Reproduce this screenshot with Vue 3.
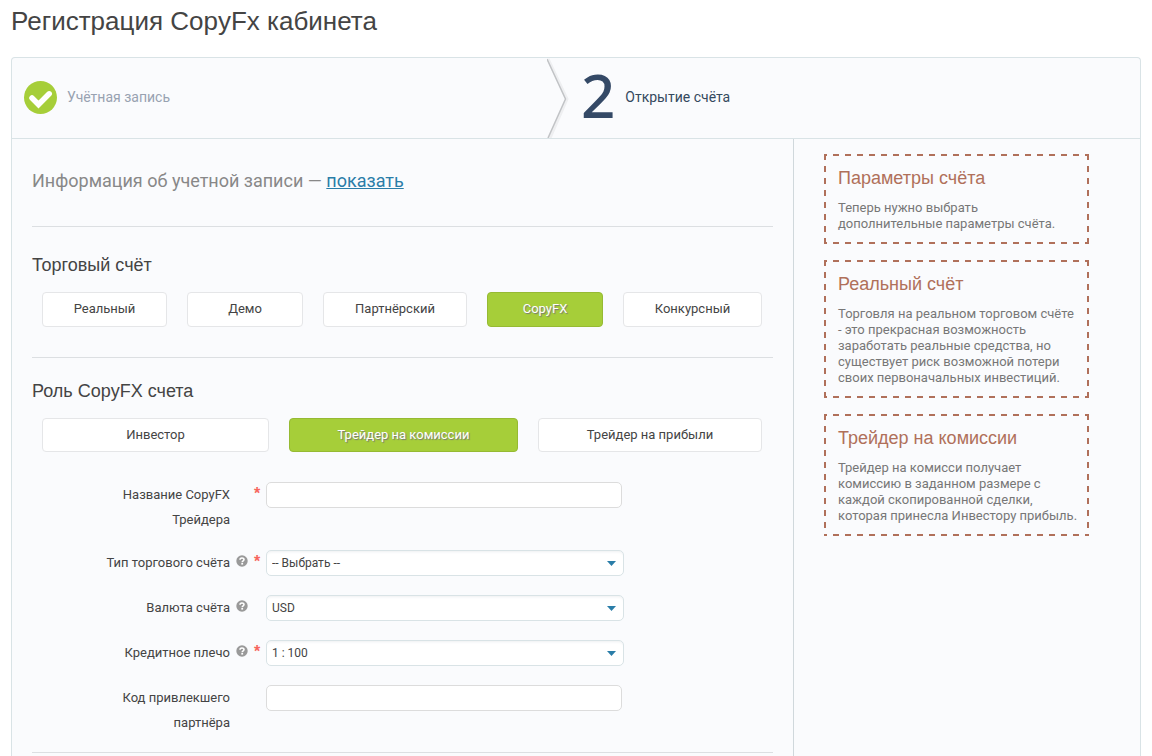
<script setup>
import { ref } from 'vue'

const accountTypes = ['Реальный', 'Демо', 'Партнёрский', 'CopyFX', 'Конкурсный']
const roles = ['Инвестор', 'Трейдер на комиссии', 'Трейдер на прибыли']
const account = ref('CopyFX')
const role = ref('Трейдер на комиссии')

const fields = [
  { id: 'trader', label: 'Название CopyFX Трейдера', required: true },
  { id: 'type', label: 'Тип торгового счёта', required: true, help: true, options: ['-- Выбрать --'] },
  { id: 'currency', label: 'Валюта счёта', help: true, options: ['USD', 'EUR'] },
  { id: 'leverage', label: 'Кредитное плечо', required: true, help: true, options: ['1 : 100', '1 : 200'] },
  { id: 'partner', label: 'Код привлекшего партнёра' },
]

const hints = [
  { title: 'Параметры счёта', text: 'Теперь нужно выбрать дополнительные параметры счёта.' },
  {
    title: 'Реальный счёт',
    text: 'Торговля на реальном торговом счёте - это прекрасная возможность заработать реальные средства, но существует риск возможной потери своих первоначальных инвестиций.',
  },
  {
    title: 'Трейдер на комиссии',
    text: 'Трейдер на комисси получает комиссию в заданном размере с каждой скопированной сделки, которая принесла Инвестору прибыль.',
  },
]
</script>

<template>
  <div class="page">
    <h1>Регистрация CopyFx кабинета</h1>
    <div class="panel">
      <header class="steps">
        <div class="step done">
          <svg width="33" height="33" viewBox="0 0 33 33" aria-hidden="true">
            <circle cx="16.5" cy="16.5" r="16.5" fill="#a6ce39" />
            <path d="M8 17l6.500 6.500L25.200 12.800" fill="none" stroke="#fff" stroke-width="5.500" stroke-linecap="round" />
          </svg>
          <span>Учётная запись</span>
        </div>
        <div class="step current">
          <svg class="arrow" width="22" height="80" viewBox="0 0 22 80" aria-hidden="true">
            <path d="M1 1L20 41L3 80" fill="none" stroke="#eeeff1" stroke-width="3" />
            <path d="M0 1L18.500 41L1 80" fill="none" stroke="#c1c3c6" stroke-width="1.500" />
          </svg>
          <span class="number">2</span>
          <span class="title">Открытие счёта</span>
        </div>
      </header>
      <div class="body">
        <main>
          <section class="info">
            <p>Информация об учетной записи — <a href="#account">показать</a></p>
          </section>
          <section class="group">
            <h2>Торговый счёт</h2>
            <div class="choices accounts">
              <button v-for="t in accountTypes" :key="t" type="button" :class="{ active: account === t }" @click="account = t">{{ t }}</button>
            </div>
          </section>
          <section class="role">
            <h2>Роль CopyFX счета</h2>
            <div class="choices roles">
              <button v-for="r in roles" :key="r" type="button" :class="{ active: role === r }" @click="role = r">{{ r }}</button>
            </div>
            <form @submit.prevent>
              <div v-for="f in fields" :key="f.id" class="field">
                <label :for="f.id">{{ f.label }}</label>
                <span class="help">
                  <svg v-if="f.help" width="12" height="12" viewBox="0 0 12 12" aria-hidden="true">
                    <circle cx="6" cy="6" r="5.700" fill="#999" />
                    <path d="M4 4.700C4 2.400 8 2.400 8 4.600C8 5.900 6.200 5.700 6.200 7.200" fill="none" stroke="#fff" stroke-width="1.600" />
                    <path d="M5.300 8h1.800v1.600h-1.800z" fill="#fff" />
                  </svg>
                </span>
                <span class="star">{{ f.required ? '*' : '' }}</span>
                <div v-if="f.options" class="select">
                  <select :id="f.id">
                    <option v-for="o in f.options" :key="o">{{ o }}</option>
                  </select>
                  <svg width="9" height="5" viewBox="0 0 9 5" aria-hidden="true"><path d="M0 0h9L4.500 5z" fill="#2a7da8" /></svg>
                </div>
                <input v-else :id="f.id" type="text" />
              </div>
            </form>
          </section>
        </main>
        <aside>
          <section v-for="h in hints" :key="h.title" class="hint">
            <h3>{{ h.title }}</h3>
            <p>{{ h.text }}</p>
          </section>
        </aside>
      </div>
    </div>
  </div>
</template>

<style>
body {
  margin: 0;
  background: #fff;
}
</style>

<style scoped>
* {
  box-sizing: border-box;
}
.page {
  display: flex;
  flex-direction: column;
  min-height: 100vh;
  padding: 0 11px;
  font: 13px/16px Roboto, sans-serif;
  color: #444;
}
h1,
h2,
h3 {
  margin: 0;
  font-family: 'Liberation Sans', Arial, sans-serif;
  font-weight: 400;
}
h1 {
  font-size: 26px;
  line-height: 30px;
  padding: 6px 0 21px;
}
.panel {
  flex: 1;
  display: flex;
  flex-direction: column;
  border: 1px solid #d9e3e6;
  border-bottom: 0;
  border-radius: 4px 4px 0 0;
  background: #fafbfd;
}
.steps {
  display: grid;
  grid-template-columns: 535fr 593fr;
  height: 81px;
  border-bottom: 1px solid #d9e3e6;
}
.step {
  display: flex;
  align-items: center;
  height: 80px;
  font-size: 14px;
}
.done {
  gap: 10px;
  padding: 0 0 2px 12px;
  color: #98a2b1;
}
.current {
  color: #34495e;
}
.number {
  font: 500 60px/74px 'Noto Sans', sans-serif;
  color: #344966;
  margin: 0 10px 6px 12px;
}
.title {
  padding-bottom: 3px;
}
.body {
  flex: 1;
  display: grid;
  grid-template-columns: 781fr 347fr;
}
main {
  padding: 0 20px;
}
.info {
  border-bottom: 1px solid #dcdfe2;
  padding: 30px 0 33px;
}
.info p {
  margin: 0;
  font-size: 18px;
  line-height: 24px;
  color: #888;
}
a {
  color: #2a7da8;
}
h2 {
  font-size: 18px;
  line-height: 24px;
}
.group {
  border-bottom: 1px solid #dcdfe2;
  padding: 26px 0 30px;
}
.role {
  border-bottom: 1px solid #dcdfe2;
  padding-top: 21px;
}
.choices {
  display: grid;
  gap: 20px;
  margin: 15px 11px 0 10px;
}
.accounts {
  grid-template-columns: 125fr 116fr 144fr 116fr 139fr;
}
.roles {
  grid-template-columns: 227fr 229fr 224fr;
}
button {
  height: 34px;
  padding: 0 0 1px;
  border: 1px solid #e5e6e8;
  border-radius: 4px;
  background: #fff;
  font: inherit;
  color: #444;
  white-space: nowrap;
}
.accounts button {
  height: 35px;
}
button.active {
  border-color: #96ba33;
  background: #a6ce39;
  color: #fff;
  text-shadow: 1px 1px 1px #777;
}
form {
  display: flex;
  flex-direction: column;
  gap: 18px;
  padding: 30px 0 17px;
}
.field {
  display: grid;
  grid-template-columns: 198px 17px 19px 358px;
  align-items: start;
  min-height: 27px;
}
label {
  justify-self: end;
  width: 130px;
  line-height: 25px;
  text-align: right;
}
.help {
  padding: 5px 0 0 6px;
  line-height: 0;
}
.star {
  padding-left: 7px;
  font: bold 16px/24px 'Liberation Sans', sans-serif;
  color: #f7665e;
}
input,
select {
  display: block;
  height: 26px;
  border: 1px solid #dcdcdc;
  border-radius: 5px;
  background: #fff;
  font: 12px/16px Roboto, sans-serif;
  color: #444;
}
input {
  width: 356px;
  padding: 0 6px;
}
.select {
  display: grid;
  align-items: center;
}
.select > * {
  grid-area: 1 / 1;
}
.select svg {
  justify-self: end;
  margin-right: 8px;
  pointer-events: none;
}
select {
  width: 100%;
  appearance: none;
  padding: 0 20px 0 5px;
  border-color: #d9e3e6;
  box-shadow: inset 0 3px 3px -2px #eef0f2;
}
aside {
  display: flex;
  flex-direction: column;
  gap: 16px;
  padding: 15px 51px 0 30px;
  border-left: 1px solid #d0d8dc;
}
.hint {
  --across: repeating-linear-gradient(90deg, #b0705a 0 6px, transparent 6px 12px);
  --down: repeating-linear-gradient(180deg, #b0705a 0 6px, transparent 6px 12px);
  padding: 12px 10px 12px 14px;
  background:
    var(--across) -3px 0 / 12px 2px repeat-x,
    var(--across) -3px 100% / 12px 2px repeat-x,
    var(--down) 0 0 / 2px 12px repeat-y,
    var(--down) 100% 0 / 2px 12px repeat-y;
}
h3 {
  margin-bottom: 10px;
  font-size: 18px;
  line-height: 24px;
  color: #b0705a;
}
.hint p {
  margin: 0;
  color: #777;
}
</style>
